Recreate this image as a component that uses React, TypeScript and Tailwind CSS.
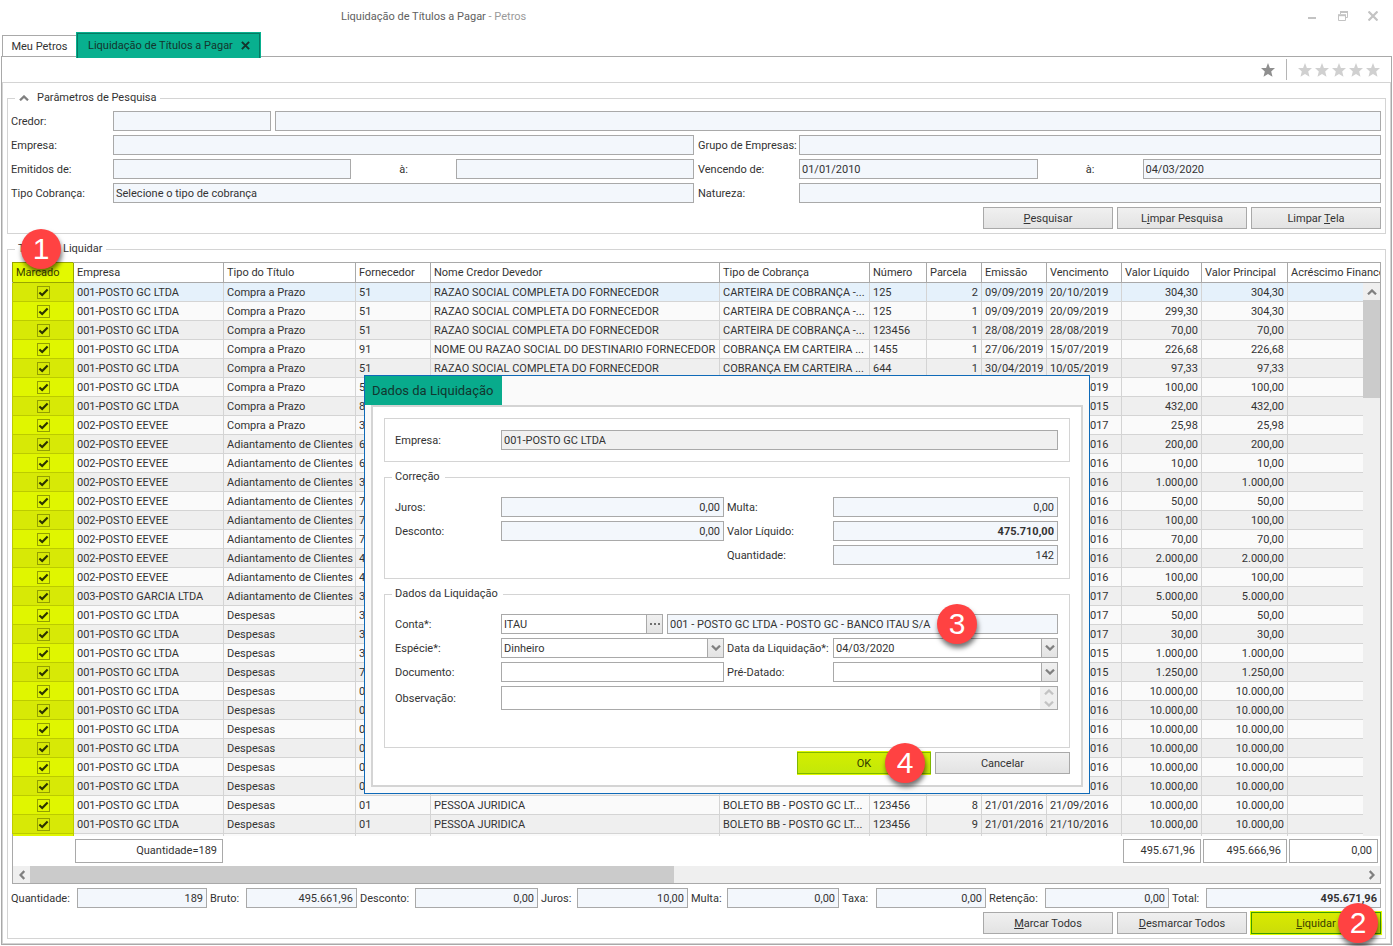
import React from "react";

type Row = {
  empresa: string;
  tipo: string;
  fornecedor: string;
  nome?: string;
  cobranca?: string;
  numero?: string;
  parcela?: string;
  emissao?: string;
  vencimento: string;
  liquido: string;
  principal: string;
};

const GC = "001-POSTO GC LTDA";
const EEVEE = "002-POSTO EEVEE";
const GARCIA = "003-POSTO GARCIA LTDA";
const PRAZO = "Compra a Prazo";
const ADIANT = "Adiantamento de Clientes";
const DESP = "Despesas";
const RAZAO = "RAZAO SOCIAL COMPLETA DO FORNECEDOR";

const short = (
  empresa: string,
  tipo: string,
  fornecedor: string,
  vencimento: string,
  valor: string
): Row => ({ empresa, tipo, fornecedor, vencimento, liquido: valor, principal: valor });

const rows: Row[] = [
  { empresa: GC, tipo: PRAZO, fornecedor: "51", nome: RAZAO, cobranca: "CARTEIRA DE COBRANÇA -...", numero: "125", parcela: "2", emissao: "09/09/2019", vencimento: "20/10/2019", liquido: "304,30", principal: "304,30" },
  { empresa: GC, tipo: PRAZO, fornecedor: "51", nome: RAZAO, cobranca: "CARTEIRA DE COBRANÇA -...", numero: "125", parcela: "1", emissao: "09/09/2019", vencimento: "20/09/2019", liquido: "299,30", principal: "304,30" },
  { empresa: GC, tipo: PRAZO, fornecedor: "51", nome: RAZAO, cobranca: "CARTEIRA DE COBRANÇA -...", numero: "123456", parcela: "1", emissao: "28/08/2019", vencimento: "28/08/2019", liquido: "70,00", principal: "70,00" },
  { empresa: GC, tipo: PRAZO, fornecedor: "91", nome: "NOME OU RAZAO SOCIAL DO DESTINARIO FORNECEDOR", cobranca: "COBRANÇA EM CARTEIRA ...", numero: "1455", parcela: "1", emissao: "27/06/2019", vencimento: "15/07/2019", liquido: "226,68", principal: "226,68" },
  { empresa: GC, tipo: PRAZO, fornecedor: "51", nome: RAZAO, cobranca: "COBRANÇA EM CARTEIRA ...", numero: "644", parcela: "1", emissao: "30/04/2019", vencimento: "10/05/2019", liquido: "97,33", principal: "97,33" },
  short(GC, PRAZO, "51", "10/04/2019", "100,00"),
  short(GC, PRAZO, "81", "10/12/2015", "432,00"),
  short(EEVEE, PRAZO, "31", "10/01/2017", "25,98"),
  short(EEVEE, ADIANT, "61", "10/12/2016", "200,00"),
  short(EEVEE, ADIANT, "61", "10/12/2016", "10,00"),
  short(EEVEE, ADIANT, "31", "10/11/2016", "1.000,00"),
  short(EEVEE, ADIANT, "71", "10/11/2016", "50,00"),
  short(EEVEE, ADIANT, "71", "10/10/2016", "100,00"),
  short(EEVEE, ADIANT, "71", "10/10/2016", "70,00"),
  short(EEVEE, ADIANT, "41", "10/09/2016", "2.000,00"),
  short(EEVEE, ADIANT, "41", "10/09/2016", "100,00"),
  short(GARCIA, ADIANT, "31", "10/03/2017", "5.000,00"),
  short(GC, DESP, "31", "10/02/2017", "50,00"),
  short(GC, DESP, "31", "10/01/2017", "30,00"),
  short(GC, DESP, "31", "10/12/2015", "1.000,00"),
  short(GC, DESP, "71", "10/11/2015", "1.250,00"),
  short(GC, DESP, "01", "21/03/2016", "10.000,00"),
  short(GC, DESP, "01", "21/04/2016", "10.000,00"),
  short(GC, DESP, "01", "21/05/2016", "10.000,00"),
  short(GC, DESP, "01", "21/06/2016", "10.000,00"),
  short(GC, DESP, "01", "21/07/2016", "10.000,00"),
  short(GC, DESP, "01", "21/08/2016", "10.000,00"),
  { empresa: GC, tipo: DESP, fornecedor: "01", nome: "PESSOA JURIDICA", cobranca: "BOLETO BB - POSTO GC LT...", numero: "123456", parcela: "8", emissao: "21/01/2016", vencimento: "21/09/2016", liquido: "10.000,00", principal: "10.000,00" },
  { empresa: GC, tipo: DESP, fornecedor: "01", nome: "PESSOA JURIDICA", cobranca: "BOLETO BB - POSTO GC LT...", numero: "123456", parcela: "9", emissao: "21/01/2016", vencimento: "21/10/2016", liquido: "10.000,00", principal: "10.000,00" },
];

const headers = [
  "Empresa",
  "Tipo do Título",
  "Fornecedor",
  "Nome Credor Devedor",
  "Tipo de Cobrança",
  "Número",
  "Parcela",
  "Emissão",
  "Vencimento",
  "Valor Líquido",
  "Valor Principal",
  "Acréscimo Financeiro",
];

const totals = [
  { id: "t-qtd", label: "Quantidade:", value: "189" },
  { id: "t-bruto", label: "Bruto:", value: "495.661,96" },
  { id: "t-desc", label: "Desconto:", value: "0,00" },
  { id: "t-juros", label: "Juros:", value: "10,00" },
  { id: "t-multa", label: "Multa:", value: "0,00" },
  { id: "t-taxa", label: "Taxa:", value: "0,00" },
  { id: "t-ret", label: "Retenção:", value: "0,00" },
  { id: "t-total", label: "Total:", value: "495.671,96" },
];

const box = "h-5 w-full min-w-0 border border-[#a9a9a9] pr-[3px] pl-[2px] outline-none";
const blue = `${box} bg-[#f3f7fc]`;
const white = `${box} bg-white`;
const grayButton =
  "h-[22px] border border-[#a9a9a9] bg-linear-to-b from-[#f0f0f0] to-[#e3e3e3] text-center";
const group = "min-w-0 border border-[#d4d4d4]";
const cell = "h-[19px] overflow-hidden border-r border-b border-[#d4d4d4] py-0 pr-[3px] pl-[3px] whitespace-nowrap";

const Chevron = ({ className = "", color = "#808080" }) => (
  <svg viewBox="0 0 10 6" className={`h-[6px] w-[10px] ${className}`}>
    <path d="M1 5.3 L5 1.5 L9 5.3" fill="none" stroke={color} strokeWidth="2.3" />
  </svg>
);

const Star = ({ dark = false }) => (
  <svg viewBox="0 0 14 14" className="h-[14px] w-[14px]">
    <path
      d="M7 0 L8.9 4.9 L14 5 L10.2 8.4 L11.5 13.8 L7 10.9 L2.5 13.8 L3.8 8.4 L0 5 L5.1 4.9 Z"
      fill={dark ? "#8f8f8f" : "#d0d0d0"}
    />
  </svg>
);

const Badge = ({ n, className }: { n: number; className: string }) => (
  <span
    className={`absolute z-20 flex h-10 w-10 items-center justify-center rounded-full bg-[#ff4242] font-['Liberation_Sans',Arial,sans-serif] text-[30px] leading-none text-white shadow-[1px_4px_5px_rgba(0,0,0,0.55)] ${className}`}
  >
    {n}
  </span>
);

const TitleBar = () => (
  <header className="flex h-8 items-center justify-between pr-[14px] pl-[340px]">
    <h1 className="text-[#606060]">
      Liquidação de Títulos a Pagar <span className="text-[#9a9a9a]">- Petros</span>
    </h1>
    <div className="flex items-center gap-5">
      <button aria-label="Minimizar" className="flex h-[10px] w-[10px] items-end pb-[2px]">
        <span className="h-[2px] w-2 bg-[#c3c3c3]" />
      </button>
      <button aria-label="Restaurar">
        <svg viewBox="0 0 10 10" className="h-[10px] w-[10px]" fill="none" stroke="#c3c3c3">
          <path d="M2.5 3 V1 H9.5 V6.5 H8" strokeWidth="1" />
          <path d="M2 1 H10" strokeWidth="2" />
          <path d="M0.5 4 V9.5 H7.5 V4" />
          <path d="M0 4.2 H8" strokeWidth="2" />
        </svg>
      </button>
      <button aria-label="Fechar">
        <svg viewBox="0 0 10 10" className="h-[10px] w-[10px]" stroke="#c3c3c3" strokeWidth="2.2">
          <path d="M0.5 0.5 L9.5 9.5 M9.5 0.5 L0.5 9.5" />
        </svg>
      </button>
    </div>
  </header>
);

const Tabs = () => (
  <nav className="relative z-10 -mb-[2px] flex h-[26px] items-end pl-[2px]">
    <button className="mb-[1px] h-[22px] w-[74px] border border-r-0 border-[#a9a9a9] bg-white">
      Meu Petros
    </button>
    <div className="h-[26px] bg-[#08b08f] px-[1px] pt-[1px]">
      <button className="flex h-full w-[183px] items-center justify-between border-x border-t border-[#067a63] pr-[9px] pl-[10px] pb-[1px] text-[#14352d]">
        Liquidação de Títulos a Pagar
        <svg viewBox="0 0 10 10" className="h-[9px] w-[9px]" stroke="#14352d" strokeWidth="2.2">
          <path d="M1 1 L9 9 M9 1 L1 9" />
        </svg>
      </button>
    </div>
  </nav>
);

const Search = () => (
  <fieldset className={`${group} pr-1 pb-1 pl-[3px]`}>
    <legend className="ml-1 flex h-[17px] items-start gap-2 pr-[3px] pl-1 leading-[15px]">
      <Chevron className="mt-[5px]" />
      <span>Parâmetros de Pesquisa</span>
    </legend>
    <div className="flex flex-col gap-1 pt-1">
      <div className="flex items-center">
        <label htmlFor="credor" className="w-[102px] shrink-0">Credor:</label>
        <div className="flex flex-1 gap-1">
          <div className="w-[158px]"><input id="credor" className={blue} /></div>
          <input aria-label="Nome do credor" className={`${blue} flex-1`} />
        </div>
      </div>
      <div className="grid grid-cols-2 gap-1">
        <div className="flex items-center">
          <label htmlFor="empresa" className="w-[102px] shrink-0">Empresa:</label>
          <input id="empresa" className={blue} />
        </div>
        <div className="flex items-center">
          <label htmlFor="grupo" className="w-[101px] shrink-0 whitespace-nowrap">Grupo de Empresas:</label>
          <input id="grupo" className={blue} />
        </div>
        <div className="flex items-center">
          <label htmlFor="emitidos" className="w-[102px] shrink-0">Emitidos de:</label>
          <input id="emitidos" className={blue} />
          <label htmlFor="emitidos-a" className="w-[105px] shrink-0 text-center">à:</label>
          <input id="emitidos-a" className={blue} />
        </div>
        <div className="flex items-center">
          <label htmlFor="vencendo" className="w-[101px] shrink-0">Vencendo de:</label>
          <input id="vencendo" className={blue} defaultValue="01/01/2010" />
          <label htmlFor="vencendo-a" className="w-[105px] shrink-0 text-center">à:</label>
          <input id="vencendo-a" className={blue} defaultValue="04/03/2020" />
        </div>
        <div className="flex items-center">
          <label htmlFor="cobranca" className="w-[102px] shrink-0">Tipo Cobrança:</label>
          <input id="cobranca" className={blue} defaultValue="Selecione o tipo de cobrança" />
        </div>
        <div className="flex items-center">
          <label htmlFor="natureza" className="w-[101px] shrink-0">Natureza:</label>
          <input id="natureza" className={blue} />
        </div>
      </div>
      <div className="flex justify-end gap-1">
        <button className={`${grayButton} w-[130px]`}><u>P</u>esquisar</button>
        <button className={`${grayButton} w-[130px]`}>L<u>i</u>mpar Pesquisa</button>
        <button className={`${grayButton} w-[130px]`}>Limpar <u>T</u>ela</button>
      </div>
    </div>
  </fieldset>
);

const Check = ({ label }: { label: string }) => (
  <span className="relative mx-auto block h-[13px] w-[13px]">
    <input
      type="checkbox"
      defaultChecked
      aria-label={label}
      className="block h-[13px] w-[13px] appearance-none border border-[#93a000]"
    />
    <svg viewBox="0 0 13 13" className="pointer-events-none absolute inset-0 h-[13px] w-[13px]">
      <path d="M2.4 6.4 L5.2 9 L10.6 3.4" fill="none" stroke="#2c3300" strokeWidth="2.1" />
    </svg>
  </span>
);

const rowBg = (i: number) =>
  i === 0 ? "bg-[#e5f1fb]" : i % 2 ? "bg-[#fafafa]" : "bg-[#efefef]";

const Grid = () => (
  <div className="border border-[#a9a9a9]">
    <div className="relative">
      <table className="w-full table-fixed border-separate border-spacing-0 text-left">
        <colgroup>
          <col className="w-[61px]" />
          <col className="w-[150px]" />
          <col className="w-[132px]" />
          <col className="w-[75px]" />
          <col />
          <col className="w-[150px]" />
          <col className="w-[57px]" />
          <col className="w-[55px]" />
          <col className="w-[65px]" />
          <col className="w-[75px]" />
          <col className="w-[80px]" />
          <col className="w-[86px]" />
          <col className="w-[92px]" />
        </colgroup>
        <thead>
          <tr>
            <th className="h-5 border-r border-b border-[#98a500] bg-[#e3f900] px-[3px] py-0 font-normal text-[#3a4000] shadow-[-1px_-1px_0_#98a500]">
              Marcado
            </th>
            {headers.map((h, i) => (
              <th
                key={h}
                className={`h-5 overflow-hidden border-b border-[#a9a9a9] px-[3px] py-0 font-normal whitespace-nowrap ${i < headers.length - 1 ? "border-r" : ""}`}
              >
                {h}
              </th>
            ))}
          </tr>
        </thead>
        <tbody>
          {rows.map((r, i) => (
            <tr key={i} className={rowBg(i)}>
              <td
                className={`h-[19px] border-r border-b border-[#bccb00] p-0 shadow-[-1px_0_0_#bccb00] ${i % 2 ? "bg-[#e0f600]" : "bg-[#d7e906]"}`}
              >
                <Check label={`Marcar título ${i + 1}`} />
              </td>
              <td className={cell}>{r.empresa}</td>
              <td className={cell}>{r.tipo}</td>
              <td className={cell}>{r.fornecedor}</td>
              <td className={cell}>{r.nome}</td>
              <td className={cell}>{r.cobranca}</td>
              <td className={cell}>{r.numero}</td>
              <td className={`${cell} text-right`}>{r.parcela}</td>
              <td className={cell}>{r.emissao}</td>
              <td className={cell}>{r.vencimento}</td>
              <td className={`${cell} text-right`}>{r.liquido}</td>
              <td className={`${cell} text-right`}>{r.principal}</td>
              <td className={`${cell} border-r-0`} />
            </tr>
          ))}
          <tr className="bg-[#fafafa]">
            <td className="h-[2px] border-r border-[#bccb00] bg-[#e0f600] p-0" />
            {headers.map((h) => (
              <td key={h} className="h-[2px] border-r border-[#d4d4d4] p-0" />
            ))}
          </tr>
        </tbody>
        <tfoot>
          <tr className="h-[30px]">
            <td />
            <td className="px-px py-0">
              <div className="h-6 border border-[#a9a9a9] px-[5px] text-right leading-[22px]">Quantidade=189</div>
            </td>
            <td colSpan={8} />
            <td className="px-px py-0">
              <div className="h-6 border border-[#a9a9a9] px-[5px] text-right leading-[22px]">495.671,96</div>
            </td>
            <td className="px-px py-0">
              <div className="h-6 border border-[#a9a9a9] px-[5px] text-right leading-[22px]">495.666,96</div>
            </td>
            <td className="py-0 pr-[2px] pl-px">
              <div className="h-6 border border-[#a9a9a9] px-[5px] text-right leading-[22px]">0,00</div>
            </td>
          </tr>
        </tfoot>
      </table>
      <div className="absolute top-5 right-0 bottom-[30px] w-[17px] bg-[#efefef]">
        <div className="flex h-[17px] items-center justify-center">
          <Chevron />
        </div>
        <div className="h-[98px] bg-[#cbcbcb]" />
      </div>
    </div>
    <div className="flex h-[17px] bg-[#efefef]">
      <div className="flex w-[17px] items-center justify-center">
        <Chevron className="-rotate-90" />
      </div>
      <div className="flex flex-1">
        <div className="w-[644px] bg-[#cbcbcb]" />
      </div>
      <div className="flex w-[17px] items-center justify-center">
        <Chevron className="rotate-90" />
      </div>
    </div>
  </div>
);

const Titles = () => (
  <fieldset className={`${group} relative pr-1 pb-1 pl-[3px]`}>
    <legend className="ml-1 h-[17px] px-[3px] leading-[15px]">Títulos a Liquidar</legend>
    <Badge n={1} className="-top-[29px] left-[13px]" />
    <div className="flex flex-col gap-1 pt-1">
      <div className="pl-px">
        <Grid />
      </div>
      <div className="grid grid-cols-[66px_130fr_39px_111fr_58px_123fr_39px_111fr_39px_112fr_37px_110fr_59px_124fr_37px_175fr] items-center">
        {totals.map((t, i) => (
          <React.Fragment key={t.id}>
            <label htmlFor={t.id} className={i ? "pl-[3px]" : ""}>{t.label}</label>
            <input
              id={t.id}
              readOnly
              defaultValue={t.value}
              className={`${blue} text-right ${t.id === "t-total" ? "font-bold" : ""}`}
            />
          </React.Fragment>
        ))}
      </div>
      <div className="flex justify-end gap-1">
        <button className={`${grayButton} w-[130px]`}><u>M</u>arcar Todos</button>
        <button className={`${grayButton} w-[130px]`}><u>D</u>esmarcar Todos</button>
        <div className="relative">
          <button className="block h-[22px] w-[130px] border border-[#3a9c00] bg-linear-to-b from-[#d9ea00] to-[#cbdd08] text-center text-[#3a4000] shadow-[0_0_0_1px_#e3fb00]">
            <u>L</u>iquidar
          </button>
          <Badge n={2} className="-top-[9px] right-[3px]" />
        </div>
      </div>
    </div>
  </fieldset>
);

const comboButton =
  "flex h-full w-4 shrink-0 items-center justify-center border-l border-[#a9a9a9] bg-linear-to-b from-[#f0f0f0] to-[#e3e3e3]";

const DateBox = ({ id, value }: { id: string; value?: string }) => (
  <div className="flex h-5 border border-[#a9a9a9] bg-white">
    <input id={id} defaultValue={value} className="w-full min-w-0 px-[2px] outline-none" />
    <button aria-label="Abrir calendário" className={comboButton}>
      <Chevron className="rotate-180" />
    </button>
  </div>
);

const Dialog = () => (
  <div
    role="dialog"
    aria-labelledby="dlg-title"
    className="absolute top-[375px] left-[364px] z-20 w-[726px] border border-[#0f6ab8] bg-[#fafafa]"
  >
    <h2
      id="dlg-title"
      className="flex h-[29px] w-[137px] items-center bg-[#08ab8c] pl-[7px] text-[13px] whitespace-nowrap text-[#12362f]"
    >
      Dados da Liquidação
    </h2>
    <div className="mx-[6px] mb-[6px] border-2 border-[#d4d4d4] bg-white p-[11px]">
      <div className="flex flex-col gap-[7px]">
        <div className={`${group} flex items-center py-[11px] pr-[11px] pl-[10px]`}>
          <label htmlFor="d-empresa" className="w-[106px] shrink-0">Empresa:</label>
          <input id="d-empresa" readOnly defaultValue="001-POSTO GC LTDA" className={`${box} bg-[#f0f0f0]`} />
        </div>

        <fieldset className={`${group} pr-[11px] pb-[13px] pl-[10px]`}>
          <legend className="-ml-[3px] h-[17px] pr-[5px] pl-[3px] leading-[15px]">Correção</legend>
          <div className="grid grid-cols-[106px_223fr_109px_225fr] items-center gap-y-1 pt-[11px]">
            <label htmlFor="d-juros">Juros:</label>
            <input id="d-juros" className={`${blue} text-right`} defaultValue="0,00" />
            <label htmlFor="d-multa" className="pl-[3px]">Multa:</label>
            <input id="d-multa" className={`${blue} text-right`} defaultValue="0,00" />
            <label htmlFor="d-desconto">Desconto:</label>
            <input id="d-desconto" className={`${blue} text-right`} defaultValue="0,00" />
            <label htmlFor="d-liquido" className="pl-[3px]">Valor Líquido:</label>
            <input id="d-liquido" className={`${blue} text-right font-bold`} defaultValue="475.710,00" />
            <label htmlFor="d-qtd" className="col-start-3 pl-[3px]">Quantidade:</label>
            <input id="d-qtd" className={`${blue} text-right`} defaultValue="142" />
          </div>
        </fieldset>

        <fieldset className={`${group} pr-[11px] pb-[37px] pl-[10px]`}>
          <legend className="-ml-[3px] h-[17px] pr-[5px] pl-[3px] leading-[15px]">Dados da Liquidação</legend>
          <div className="grid grid-cols-[106px_223fr_109px_225fr] items-center gap-y-1 pt-[11px]">
            <label htmlFor="d-conta">Conta*:</label>
            <div className="relative col-span-3 flex gap-1">
              <div className="flex h-5 w-[162px] border border-[#a9a9a9] bg-white">
                <input id="d-conta" defaultValue="ITAU" className="w-full min-w-0 px-[2px] outline-none" />
                <button aria-label="Procurar conta" className={comboButton}>
                  <svg viewBox="0 0 10 2" className="h-[2px] w-[10px]" fill="#707070">
                    <path d="M0 0h2v2H0zM4 0h2v2H4zM8 0h2v2H8z" />
                  </svg>
                </button>
              </div>
              <input
                aria-label="Descrição da conta"
                readOnly
                defaultValue="001 - POSTO GC LTDA - POSTO GC - BANCO ITAU S/A"
                className={`${blue} flex-1`}
              />
              <Badge n={3} className="-top-[10px] right-[81px]" />
            </div>
            <label htmlFor="d-especie">Espécie*:</label>
            <div className="relative h-5 border border-[#a9a9a9] bg-white">
              <select id="d-especie" className="block h-full w-full appearance-none px-[2px] outline-none">
                <option>Dinheiro</option>
              </select>
              <span className="pointer-events-none absolute inset-y-0 right-0">
                <span className={comboButton}>
                  <Chevron className="rotate-180" />
                </span>
              </span>
            </div>
            <label htmlFor="d-data" className="pl-[3px] whitespace-nowrap">Data da Liquidação*:</label>
            <DateBox id="d-data" value="04/03/2020" />
            <label htmlFor="d-doc">Documento:</label>
            <input id="d-doc" className={white} />
            <label htmlFor="d-pre" className="pl-[3px]">Pré-Datado:</label>
            <DateBox id="d-pre" />
            <label htmlFor="d-obs">Observação:</label>
            <div className="col-span-3 flex h-6 border border-[#a9a9a9] bg-white">
              <textarea id="d-obs" className="h-full flex-1 resize-none overflow-hidden px-[2px] outline-none" />
              <div className="flex w-[17px] flex-col items-center justify-between bg-[#efefef] py-[2px]">
                <Chevron color="#c3c3c3" />
                <Chevron color="#c3c3c3" className="rotate-180" />
              </div>
            </div>
          </div>
        </fieldset>
      </div>
      <div className="mt-1 flex justify-end gap-1">
        <div className="relative">
          <button className="block h-[22px] w-[134px] border border-[#7fb800] bg-linear-to-b from-[#d3ee00] to-[#c3e808] text-center text-[#2f3a00] shadow-[0_1px_0_#e0f800,0_-1px_0_#e0f800]">
            OK
          </button>
          <Badge n={4} className="-top-[9px] right-[6px]" />
        </div>
        <button className={`${grayButton} w-[135px]`}>Cancelar</button>
      </div>
    </div>
  </div>
);

const App = () => {
  return (
    <div className="relative min-h-screen overflow-hidden bg-white pr-px pb-px pl-px font-[Roboto,'DejaVu_Sans_Condensed',sans-serif] text-[11px] leading-[15px] text-[#333]">
      <TitleBar />
      <div className="-ml-px">
        <Tabs />
      </div>
      <main className="border border-[#a9a9a9]">
        <div className="flex h-[26px] items-center justify-end border-b border-[#d4d4d4] pr-[11px]">
          <button aria-label="Favorito"><Star dark /></button>
          <div className="mx-[11px] h-[21px] w-px bg-[#b5b5b5]" />
          <div className="flex gap-[3px]">
            {[1, 2, 3, 4, 5].map((n) => (
              <button key={n} aria-label={`Nota ${n}`}><Star /></button>
            ))}
          </div>
        </div>
        <div className="flex flex-col gap-[7px] border-x border-b border-[#d4d4d4] px-1 pt-[7px] pb-1">
          <Search />
          <Titles />
        </div>
      </main>
      <Dialog />
    </div>
  );
};

export default App;
